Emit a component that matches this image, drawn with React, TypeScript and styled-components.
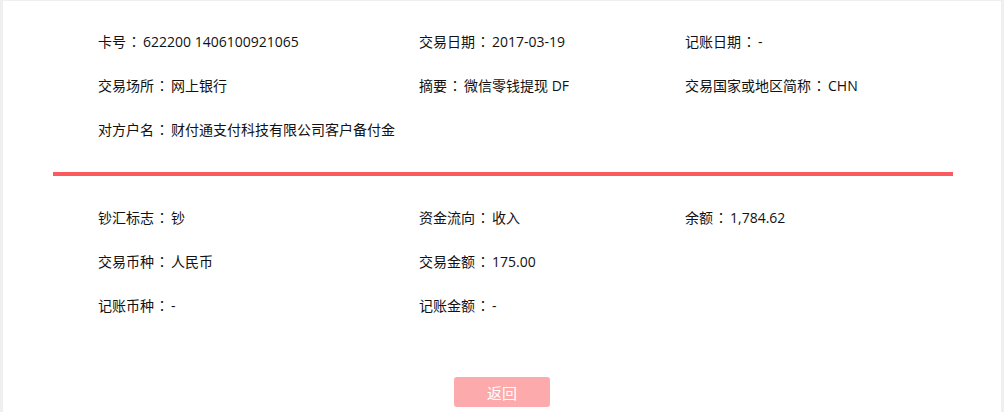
import { createGlobalStyle, styled } from "styled-components"

const GlobalStyle = createGlobalStyle`
    html, body {
        margin: 0;
        padding: 0;
        background: #efefef;
    }
    body {
        font-family: "Open Sans", "Noto Sans CJK SC", sans-serif;
        font-size: 14px;
        color: #111;
    }
`

const Page = styled.div`
    padding: 1px 3px 0 3px;
    height: 411px;
    overflow: hidden;
`

const Panel = styled.div`
    background: #fff;
    height: 100%;
    padding: 18px 0 0 0;
    box-sizing: border-box;
`

const Section = styled.div`
    width: 900px;
    margin-left: 50px;
    padding-left: 45px;
    box-sizing: border-box;
`

const InfoGrid = styled.div`
    display: grid;
    grid-template-columns: 321px 266px 1fr;
    grid-auto-rows: 44px;
    align-items: center;
`

const InfoItem = styled.div`
    white-space: nowrap;
    line-height: 20px;
`

// full-width colon centred in its box, as in the original
const Colon = styled.span`
    font-family: "Noto Sans CJK TC", sans-serif;
    padding: 0 2px 0 1px;
`

const Divider = styled.div`
    width: 900px;
    height: 4px;
    margin: 21px 0 19px 50px;
    background: #fb5a5e;
`

const Footer = styled.div`
    display: flex;
    justify-content: center;
    padding-top: 50px;
`

const BackButton = styled.button`
    width: 96px;
    height: 30px;
    border: none;
    border-radius: 3px;
    background: #fcaaab;
    color: #fff;
    font-family: "Noto Sans CJK SC", sans-serif;
    font-size: 15px;
    cursor: pointer;
`

type Item = { label: string; value: string }

const topItems: Item[] = [
    { label: "卡号", value: "622200 1406100921065" },
    { label: "交易日期", value: "2017-03-19" },
    { label: "记账日期", value: "-" },
    { label: "交易场所", value: "网上银行" },
    { label: "摘要", value: "微信零钱提现 DF" },
    { label: "交易国家或地区简称", value: "CHN" },
    { label: "对方户名", value: "财付通支付科技有限公司客户备付金" },
]

const bottomItems: (Item | null)[] = [
    { label: "钞汇标志", value: "钞" },
    { label: "资金流向", value: "收入" },
    { label: "余额", value: "1,784.62" },
    { label: "交易币种", value: "人民币" },
    { label: "交易金额", value: "175.00" },
    null,
    { label: "记账币种", value: "-" },
    { label: "记账金额", value: "-" },
]

const renderItems = (items: (Item | null)[]) =>
    items.map((item, i) =>
        item ? (
            <InfoItem key={i}>
                {item.label}
                <Colon>：</Colon>
                {item.value}
            </InfoItem>
        ) : (
            <div key={i} />
        )
    )

const App = () => {
    return (
        <>
            <GlobalStyle />
            <Page>
                <Panel>
                    <Section>
                        <InfoGrid>{renderItems(topItems)}</InfoGrid>
                    </Section>
                    <Divider />
                    <Section>
                        <InfoGrid>{renderItems(bottomItems)}</InfoGrid>
                    </Section>
                    <Footer>
                        <BackButton>返回</BackButton>
                    </Footer>
                </Panel>
            </Page>
        </>
    )
}

export default App
